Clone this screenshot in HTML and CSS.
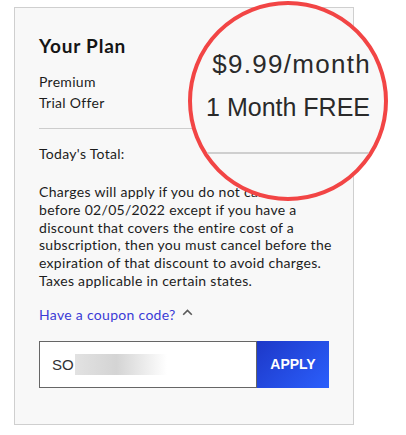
FILE: index.html
```html
<!DOCTYPE html>
<html>
<head>
<meta charset="utf-8">
<link rel="stylesheet" href="styles.css">
</head>
<body>
<div class="stage">
  <div class="card">
    <h2 class="plan-title">Your Plan</h2>
    <div class="plan-rows">
      <div class="plan-row">Premium</div>
      <div class="plan-row">Trial Offer</div>
    </div>
    <hr class="divider">
    <div class="total">Today's Total:</div>
    <p class="terms">Charges will apply if you do not cancel<br>before 02/05/2022 except if you have a<br>discount that covers the entire cost of a<br>subscription, then you must cancel before the<br>expiration of that discount to avoid charges.<br>Taxes applicable in certain states.</p>
    <div class="coupon-toggle">Have a coupon code?
      <svg class="chev" width="11" height="7" viewBox="0 0 11 7"><path d="M1.2 5.8 L5.5 1.5 L9.8 5.8" fill="none" stroke="#5a5a5a" stroke-width="1.6"/></svg>
    </div>
    <div class="coupon-form">
      <div class="coupon-input"><span class="code">SO</span><span class="blur"></span></div>
      <button class="apply">APPLY</button>
    </div>
  </div>
  <div class="magnifier">
    <div class="mag-price">$9.99/month</div>
    <div class="mag-offer">1 Month FREE</div>
    <div class="mag-line"></div>
  </div>
</div>
</body>
</html>
```
FILE: styles.css
```css
html, body { margin: 0; padding: 0; background: #fff; }
body { font-family: Lato, "Noto Sans", sans-serif; color: #1c1c1c; }
.stage { position: relative; width: 406px; height: 435px; padding: 7px 0 0 14px; box-sizing: border-box; }
.card {
  width: 340px; height: 418px; box-sizing: border-box;
  border: 1px solid #cfcfcf; background: #f8f8f8;
  padding: 26px 23px 0 24px;
}
.plan-title { margin: 0; font-size: 19px; font-weight: 700; line-height: 24px; color: #151515; letter-spacing: 0.8px; }
.plan-rows { margin-top: 14px; display: flex; flex-direction: column; gap: 1px; }
.plan-row { font-size: 14px; line-height: 20px; letter-spacing: 0.3px; }
.divider { border: 0; border-top: 1px solid #cdcdcd; margin: 15px 0 0; }
.total { margin-top: 15px; font-size: 14px; line-height: 20px; letter-spacing: 0.3px; }
.terms { margin: 19px -10px 0 0; font-size: 14px; line-height: 17.8px; letter-spacing: 0.3px; }
.coupon-toggle { margin-top: 15px; font-size: 14px; line-height: 20px; letter-spacing: 0.3px; color: #3b3bd6; display: flex; align-items: center; gap: 6px; }
.chev { margin-top: -5px; }
.coupon-form { margin-top: 16px; display: flex; height: 47px; }
.coupon-input {
  width: 218px; box-sizing: border-box; background: #fff;
  border: 1px solid #666; display: flex; align-items: center; padding-left: 12px;
}
.code { font-size: 15px; color: #333; font-family: "Liberation Sans", Arial, sans-serif; }
.blur { display: block; width: 92px; height: 21px; margin-left: 1px; background: linear-gradient(to right, #e2e2e2, #d4d4d4 45%, #fff); }
.apply {
  width: 72px; border: 0; color: #fff; font-weight: 700; font-size: 14px;
  font-family: "Liberation Sans", Arial, sans-serif;
  background: linear-gradient(135deg, #1d38c8, #2b5ffc);
}
.magnifier {
  position: absolute; left: 188px; top: 1px; width: 200px; height: 200px;
  box-sizing: border-box; border: 4px solid #f24545; border-radius: 50%;
  background: #f8f8f8; overflow: hidden;
  display: flex; flex-direction: column; align-items: flex-end;
  padding: 44px 14px 0 0;
  font-family: "Liberation Sans", Arial, sans-serif; color: #2a2a2a;
}
.mag-price { font-size: 26px; line-height: 30px; letter-spacing: 1.3px; margin-right: -1px; }
.mag-offer { font-size: 25px; line-height: 28px; margin-top: 14px; }
.mag-line { align-self: stretch; height: 2px; background: #cfcfcf; margin: 31px -20px 0 -20px; }
```
